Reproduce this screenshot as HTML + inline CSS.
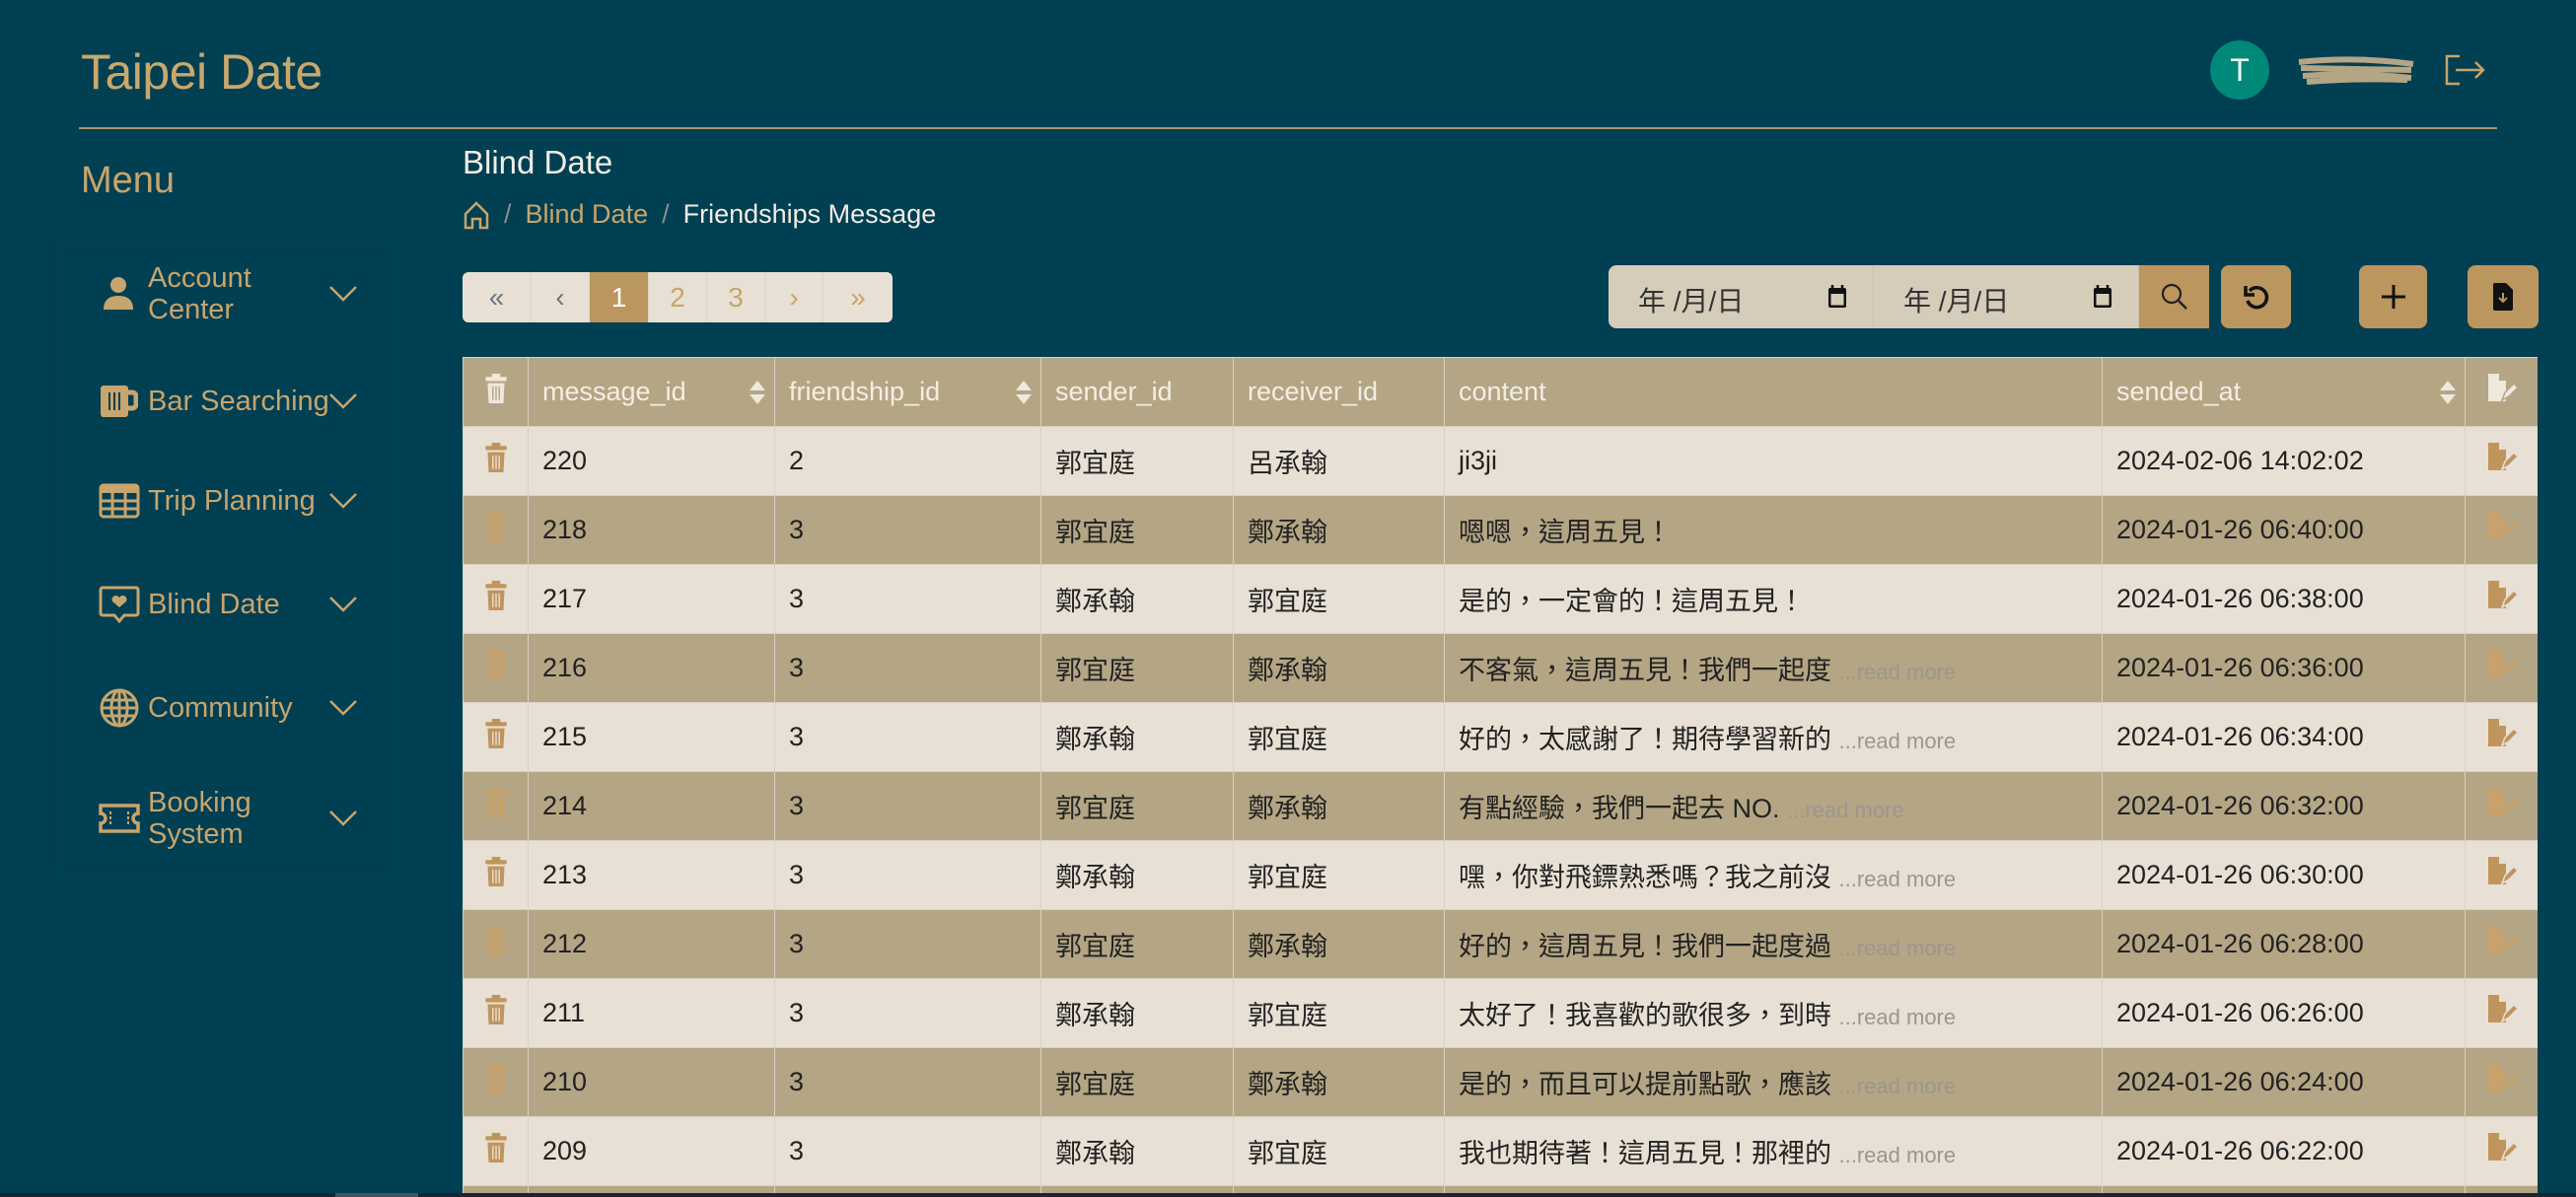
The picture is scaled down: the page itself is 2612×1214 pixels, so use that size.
<!DOCTYPE html>
<html style="width:2612px;height:1214px;overflow:hidden"><head><meta charset="utf-8">
<style>
*{margin:0;padding:0;box-sizing:border-box}
body{width:2612px;height:1214px;background:#013f53;font-family:"Liberation Sans","Noto Sans CJK TC",sans-serif;position:relative;overflow:hidden;color:#222}
.abs{position:absolute}
.title{left:82px;top:44px;font-size:50px;color:#c9a86c;letter-spacing:-0.5px}
.hline{left:80px;top:129px;width:2452px;height:2px;background:#a8946a}
.menu{left:82px;top:162px;font-size:38px;color:#c7a56c}
.side{left:60px;top:245px;width:340px;height:645px;border:1px solid rgba(255,255,255,0.02);border-radius:10px}
.mi{position:absolute;left:100px;width:270px;color:#c7a56c;font-size:29px;line-height:32px}
.mi .ic{position:absolute;left:0;top:50%;transform:translateY(-50%)}
.mi .tx{position:absolute;left:50px;top:50%;transform:translateY(-50%)}
.mi .ch{position:absolute;left:233px;top:50%;transform:translateY(-50%)}
.h2{left:469px;top:146px;font-size:33px;color:#f2ede4}
.bc{left:469px;top:202px;font-size:27px;color:#c7a56c;display:flex;align-items:center;gap:0}
.pag{left:469px;top:276px;height:51px;width:436px;background:#e8e0d4;border-radius:6px;display:flex;overflow:hidden}
.pag div{height:51px;display:flex;align-items:center;justify-content:center;font-size:28px;color:#c7a56c;border-right:1px solid #ddd3c3}
.dt{left:1631px;top:269px;width:609px;height:64px;background:#d6ccba;border-radius:8px 0 0 8px;display:flex;overflow:hidden}
.dt .f{width:269px;height:64px;position:relative;border-right:1px solid #c9bfae;font-size:28px;color:#333}
.btn{background:#bb965f;border-radius:8px;display:flex;align-items:center;justify-content:center}
.tw{position:absolute;left:469px;top:362px;width:2104px;height:848px;overflow:hidden}
table{width:2104px;border-collapse:collapse;table-layout:fixed}
td,th{height:70px;border:1.5px solid #d9d1c3;font-size:27px;font-weight:normal;text-align:left;padding-left:14px;white-space:nowrap;overflow:hidden}
th{background:#b4a584;color:#f3eee5;position:relative}
tr.o td{background:#e8e0d4}
tr.e td{background:#b4a584}
td.i,th.i{padding-left:0;text-align:center}
.rm{color:#9b968e;font-size:22px}
.sort{position:absolute;right:8px;top:22px}
</style></head><body>
<div class="abs title">Taipei Date</div>
<div class="abs hline"></div>
<div class="abs" style="left:2241px;top:41px;width:60px;height:60px;border-radius:50%;background:#008878;color:#fff;font-size:32px;display:flex;align-items:center;justify-content:center">T</div>
<svg class="abs" style="left:2329px;top:55px" width="122" height="32"><path d="M2 8 Q60 2 118 10 M4 14 L116 16 M6 22 Q60 18 116 24 M10 28 Q60 24 112 26" stroke="#b4a584" stroke-width="6" fill="none"/></svg>
<svg class="abs" style="left:2478px;top:55px" width="44" height="32" viewBox="0 0 44 32"><path d="M16 2H3v28h13" stroke="#c7a56c" stroke-width="2.5" fill="none"/><path d="M12 16h28M32 8l8 8-8 8" stroke="#c7a56c" stroke-width="2.5" fill="none"/></svg>
<div class="abs menu">Menu</div>
<div class="abs side"></div>

<div class="mi" style="top:268px;height:60px"><svg class="ic" width="40" height="36" viewBox="0 0 40 36"><circle cx="20" cy="9" r="8" fill="#c7a56c"/><path d="M5 34q0-14 15-14t15 14z" fill="#c7a56c"/></svg><div class="tx">Account<br>Center</div><svg class="ch" width="30" height="18"><path d="M2 2l13 13 13-13" stroke="#c7a56c" stroke-width="2.5" fill="none"/></svg></div>
<div class="mi" style="top:387px;height:40px"><svg class="ic" width="40" height="36" viewBox="0 0 40 36"><rect x="2" y="2" width="28" height="32" rx="3" fill="#c7a56c"/><path d="M30 9h4a4 4 0 014 4v8a4 4 0 01-4 4h-4" stroke="#c7a56c" stroke-width="5" fill="none"/><path d="M11 9v18M16 9v18M21 9v18" stroke="#013f53" stroke-width="2"/></svg><div class="tx">Bar Searching</div><svg class="ch" width="30" height="18"><path d="M2 2l13 13 13-13" stroke="#c7a56c" stroke-width="2.5" fill="none"/></svg></div>
<div class="mi" style="top:488px;height:40px"><svg class="ic" width="42" height="36" viewBox="0 0 42 36"><rect x="2" y="2" width="38" height="32" rx="3" fill="none" stroke="#c7a56c" stroke-width="3"/><rect x="2" y="2" width="38" height="8" fill="#c7a56c"/><path d="M2 18h38M2 26h38M14 10v24M27 10v24" stroke="#c7a56c" stroke-width="3"/></svg><div class="tx">Trip Planning</div><svg class="ch" width="30" height="18"><path d="M2 2l13 13 13-13" stroke="#c7a56c" stroke-width="2.5" fill="none"/></svg></div>
<div class="mi" style="top:593px;height:40px"><svg class="ic" width="42" height="38" viewBox="0 0 42 38"><path d="M4 2h34a2 2 0 012 2v24a2 2 0 01-2 2H26l-5 6-5-6H4a2 2 0 01-2-2V4a2 2 0 012-2z" fill="none" stroke="#c7a56c" stroke-width="3"/><path d="M21 22l-7-6a4 4 0 017-4 4 4 0 017 4z" fill="#c7a56c"/></svg><div class="tx">Blind Date</div><svg class="ch" width="30" height="18"><path d="M2 2l13 13 13-13" stroke="#c7a56c" stroke-width="2.5" fill="none"/></svg></div>
<div class="mi" style="top:698px;height:40px"><svg class="ic" width="42" height="42" viewBox="0 0 42 42"><circle cx="21" cy="21" r="18" fill="none" stroke="#c7a56c" stroke-width="3"/><ellipse cx="21" cy="21" rx="8" ry="18" fill="none" stroke="#c7a56c" stroke-width="3"/><path d="M3 21h36M6 13h30M6 29h30M21 3v36" stroke="#c7a56c" stroke-width="3"/></svg><div class="tx">Community</div><svg class="ch" width="30" height="18"><path d="M2 2l13 13 13-13" stroke="#c7a56c" stroke-width="2.5" fill="none"/></svg></div>
<div class="mi" style="top:800px;height:60px"><svg class="ic" width="42" height="32" viewBox="0 0 42 32"><path d="M2 3h38v8a5 5 0 000 10v8H2v-8a5 5 0 000-10z" fill="none" stroke="#c7a56c" stroke-width="3.5"/><path d="M12 9v14M30 9v14" stroke="#c7a56c" stroke-width="2" stroke-dasharray="3 2"/></svg><div class="tx">Booking<br>System</div><svg class="ch" width="30" height="18"><path d="M2 2l13 13 13-13" stroke="#c7a56c" stroke-width="2.5" fill="none"/></svg></div>

<div class="abs h2">Blind Date</div>
<div class="abs bc"><svg width="28" height="30" viewBox="0 0 28 30"><path d="M3 14L14 3l11 11v14H18v-9h-8v9H3z" fill="none" stroke="#c7a56c" stroke-width="2.5"/></svg><span style="color:#8a8f8f;margin:0 14px">/</span><span>Blind Date</span><span style="color:#8a8f8f;margin:0 14px">/</span><span style="color:#f2ede4">Friendships Message</span></div>

<div class="abs pag"><div style="width:70px;color:#6b7680">«</div><div style="width:59px;color:#6b7680">‹</div><div style="width:60px;background:#bb965f;color:#fff">1</div><div style="width:59px">2</div><div style="width:59px">3</div><div style="width:59px">›</div><div style="width:70px;border:none">»</div></div>

<div class="abs dt">
<div class="f"><span style="position:absolute;left:30px;top:15px">年 /月/日</span><svg style="position:absolute;left:222px;top:20px" width="20" height="24" viewBox="0 0 20 24"><rect x="1" y="3" width="18" height="20" rx="2" fill="#111"/><rect x="3.5" y="9" width="13" height="11.5" fill="#d6ccba"/><path d="M5 0v5M15 0v5" stroke="#111" stroke-width="2.5"/></svg></div>
<div class="f"><span style="position:absolute;left:30px;top:15px">年 /月/日</span><svg style="position:absolute;left:222px;top:20px" width="20" height="24" viewBox="0 0 20 24"><rect x="1" y="3" width="18" height="20" rx="2" fill="#111"/><rect x="3.5" y="9" width="13" height="11.5" fill="#d6ccba"/><path d="M5 0v5M15 0v5" stroke="#111" stroke-width="2.5"/></svg></div>
<div class="btn" style="width:71px;height:64px;border-radius:0"><svg width="30" height="30" viewBox="0 0 30 30"><circle cx="12" cy="12" r="9" fill="none" stroke="#222" stroke-width="2.2"/><path d="M19 19l8 8" stroke="#222" stroke-width="2.5"/></svg></div>
</div>
<div class="abs btn" style="left:2252px;top:269px;width:71px;height:64px"><svg width="30" height="30" viewBox="0 0 30 30"><path d="M8 9a10 10 0 11-2 10" fill="none" stroke="#111" stroke-width="3.5"/><path d="M4 4v9h9" fill="none" stroke="#111" stroke-width="3.5"/></svg></div>
<div class="abs btn" style="left:2392px;top:269px;width:69px;height:64px"><svg width="28" height="28"><path d="M14 2v24M2 14h24" stroke="#111" stroke-width="3"/></svg></div>
<div class="abs btn" style="left:2502px;top:269px;width:72px;height:64px"><svg width="20" height="28" viewBox="0 0 20 28"><path d="M2 0h11l7 7v19a2 2 0 01-2 2H2a2 2 0 01-2-2V2a2 2 0 012-2z" fill="#111"/><path d="M10 10v9M6 15l4 4 4-4" stroke="#bb965f" stroke-width="2" fill="none"/></svg></div>

<div class="tw"><table>
<colgroup><col style="width:66px"><col style="width:250px"><col style="width:270px"><col style="width:195px"><col style="width:214px"><col style="width:667px"><col style="width:368px"><col style="width:74px"></colgroup>
<tr><th class="i"><svg width="22" height="30" viewBox="0 0 20 28"><rect x="0" y="3" width="20" height="4" rx="1" fill="#eee8dd"/><rect x="6" y="0" width="8" height="4" fill="#eee8dd"/><path d="M2 9h16l-1 19H3z" fill="#eee8dd"/><path d="M7 12v13M10 12v13M13 12v13" stroke="#b4a584" stroke-width="1.3"/></svg></th>
<th>message_id<svg class="sort" width="18" height="26"><path d="M9 1l8 10H1zM9 25l8-10H1z" fill="#eee8dd"/></svg></th>
<th>friendship_id<svg class="sort" width="18" height="26"><path d="M9 1l8 10H1zM9 25l8-10H1z" fill="#eee8dd"/></svg></th>
<th>sender_id</th><th>receiver_id</th><th>content</th>
<th>sended_at<svg class="sort" width="18" height="26"><path d="M9 1l8 10H1zM9 25l8-10H1z" fill="#eee8dd"/></svg></th>
<th class="i"><svg width="32" height="30" viewBox="0 0 32 30"><path d="M2 0h11l7 7v21H2z" fill="#eee8dd"/><path d="M13 0v7h7" fill="#b4a584"/><path d="M16 27l3-8 9-9 4 4-9 9z" fill="#eee8dd" stroke="#b4a584" stroke-width="1.5"/></svg></th></tr>
</table></div>
<script>
var rows=[["220","2","郭宜庭","呂承翰","ji3ji","","2024-02-06 14:02:02"],
["218","3","郭宜庭","鄭承翰","嗯嗯，這周五見！","","2024-01-26 06:40:00"],
["217","3","鄭承翰","郭宜庭","是的，一定會的！這周五見！","","2024-01-26 06:38:00"],
["216","3","郭宜庭","鄭承翰","不客氣，這周五見！我們一起度",1,"2024-01-26 06:36:00"],
["215","3","鄭承翰","郭宜庭","好的，太感謝了！期待學習新的",1,"2024-01-26 06:34:00"],
["214","3","郭宜庭","鄭承翰","有點經驗，我們一起去 NO.",1,"2024-01-26 06:32:00"],
["213","3","鄭承翰","郭宜庭","嘿，你對飛鏢熟悉嗎？我之前沒",1,"2024-01-26 06:30:00"],
["212","3","郭宜庭","鄭承翰","好的，這周五見！我們一起度過",1,"2024-01-26 06:28:00"],
["211","3","鄭承翰","郭宜庭","太好了！我喜歡的歌很多，到時",1,"2024-01-26 06:26:00"],
["210","3","郭宜庭","鄭承翰","是的，而且可以提前點歌，應該",1,"2024-01-26 06:24:00"],
["209","3","鄭承翰","郭宜庭","我也期待著！這周五見！那裡的",1,"2024-01-26 06:22:00"],
["208","3","郭宜庭","鄭承翰","",0,""]];
var t=document.querySelector('table'),h='';
rows.forEach(function(r,i){var c=i%2?'#c8a26c':'#c0955d';
h+='<tr class="'+(i%2?'e':'o')+'"><td class="i"><svg width="22" height="30" viewBox="0 0 20 28"><rect x="0" y="3" width="20" height="4" rx="1" fill="'+c+'"/><rect x="6" y="0" width="8" height="4" fill="'+c+'"/><path d="M2 9h16l-1 19H3z" fill="'+c+'"/><path d="M7 12v13M10 12v13M13 12v13" stroke="'+(i%2?'#b4a584':'#e8e0d4')+'" stroke-width="1.3"/></svg></td><td>'+r[0]+'</td><td>'+r[1]+'</td><td>'+r[2]+'</td><td>'+r[3]+'</td><td>'+r[4]+(r[5]?' <span class="rm">...read more</span>':'')+'</td><td>'+r[6]+'</td><td class="i"><svg width="32" height="30" viewBox="0 0 32 30"><path d="M2 0h11l7 7v21H2z" fill="'+c+'"/><path d="M13 0v7h7" fill="'+(i%2?'#b4a584':'#e8e0d4')+'"/><path d="M16 27l3-8 9-9 4 4-9 9z" fill="'+c+'" stroke="'+(i%2?'#b4a584':'#e8e0d4')+'" stroke-width="1.5"/></svg></td></tr>';});
t.insertAdjacentHTML('beforeend',h);
</script>
<div class="abs" style="left:0;top:1210px;width:2612px;height:4px;background:#1c2430"></div>
<div class="abs" style="left:340px;top:1210px;width:84px;height:4px;background:#4a5260"></div>
</body></html>
